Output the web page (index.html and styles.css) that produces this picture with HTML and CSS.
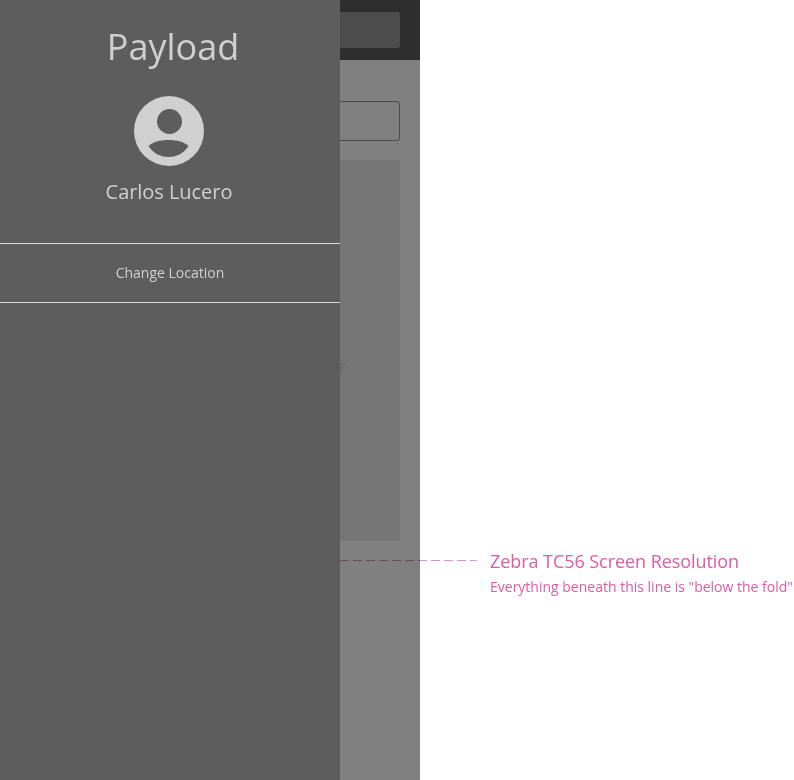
FILE: index.html
```html
<!DOCTYPE html>
<html lang="en">
<head>
<meta charset="utf-8">
<title>Payload</title>
<link rel="stylesheet" href="styles.css">
</head>
<body>
<div class="canvas">
  <div class="device">
    <header class="topbar"><div class="topbar-btn"></div></header>
    <main class="content">
      <div class="field"></div>
      <section class="panel"><p class="panel-text">r</p></section>
    </main>
    <aside class="drawer">
      <h1 class="brand">Payload</h1>
      <svg class="avatar" viewBox="0 0 70 70" width="70" height="70" aria-hidden="true">
        <circle cx="35" cy="35" r="35" fill="#d0d0d0"/>
        <circle cx="35.500" cy="25.500" r="12.500" fill="#5d5d5d"/>
        <path d="M14.500 50C18.500 46 26 44 34.500 44s16 2 20 6C50 57 43 61 34.500 61S19 57 14.500 50Z" fill="#5d5d5d"/>
      </svg>
      <p class="user">Carlos Lucero</p>
      <nav class="menu"><a class="menu-item">Change Location</a></nav>
    </aside>
  </div>
  <div class="fold">
    <div class="fold-line"></div>
    <div class="fold-note">
      <div class="fold-title">Zebra TC56 Screen Resolution</div>
      <div class="fold-sub">Everything beneath this line is "below the fold"</div>
    </div>
  </div>
</div>
</body>
</html>
```
FILE: styles.css
```css
* { box-sizing: border-box; }
html, body { margin: 0; height: 100%; overflow: hidden; background: #fff; }
body { font-family: "Open Sans", "Noto Sans", sans-serif; }
.canvas { position: relative; width: 794px; height: 780px; overflow: hidden; background: #fff; }
.device { position: relative; width: 420px; height: 780px; background: #808080; overflow: hidden; }
.topbar { height: 60px; padding: 12px 20px; background: #2e2e2e; }
.topbar-btn { height: 36px; border-radius: 3px; background: #4d4d4d; }
.content { padding: 41px 20px 0; }
.field { height: 40px; border: 1px solid #4b4b4b; border-radius: 3px; }
.panel { height: 381px; margin-top: 19px; background: #767676; padding-top: 195px; padding-left: 319px; }
.panel-text { margin: 0; font-size: 17px; line-height: 22px; color: #666; }
.drawer { position: absolute; left: 0; top: 0; bottom: 0; width: 340px; background: #5d5d5d; display: flex; flex-direction: column; align-items: center; }
.brand { margin: 23px 0 0 6px; font-size: 36px; line-height: 48px; font-weight: 400; color: #d0d0d0; }
.avatar { display: block; margin: 25px 2px 0 0; }
.user { margin: 12px 2px 0 0; font-size: 20px; line-height: 27px; color: #d0d0d0; letter-spacing: -0.05px; }
.menu { width: 100%; margin-top: 38px; border-top: 1px solid #d8d8d8; border-bottom: 1px solid #d8d8d8; height: 60px; display: flex; align-items: center; justify-content: center; padding-bottom: 1px; }
.menu-item { font-size: 14px; line-height: 19px; color: #d0d0d0; }
.fold { position: absolute; left: 340px; top: 551px; display: flex; align-items: flex-start; }
.fold-line { width: 137px; height: 1px; margin-top: 9px; background: repeating-linear-gradient(90deg, #d49abf 0 9px, transparent 9px 13px); mix-blend-mode: multiply; }
.fold-note { margin-left: 13px; white-space: nowrap; color: #e05aa5; }
.fold-title { font-size: 18px; line-height: 24px; margin-top: -2px; letter-spacing: -0.06px; }
.fold-sub { font-size: 14px; line-height: 19px; margin-top: 4px; }
```
